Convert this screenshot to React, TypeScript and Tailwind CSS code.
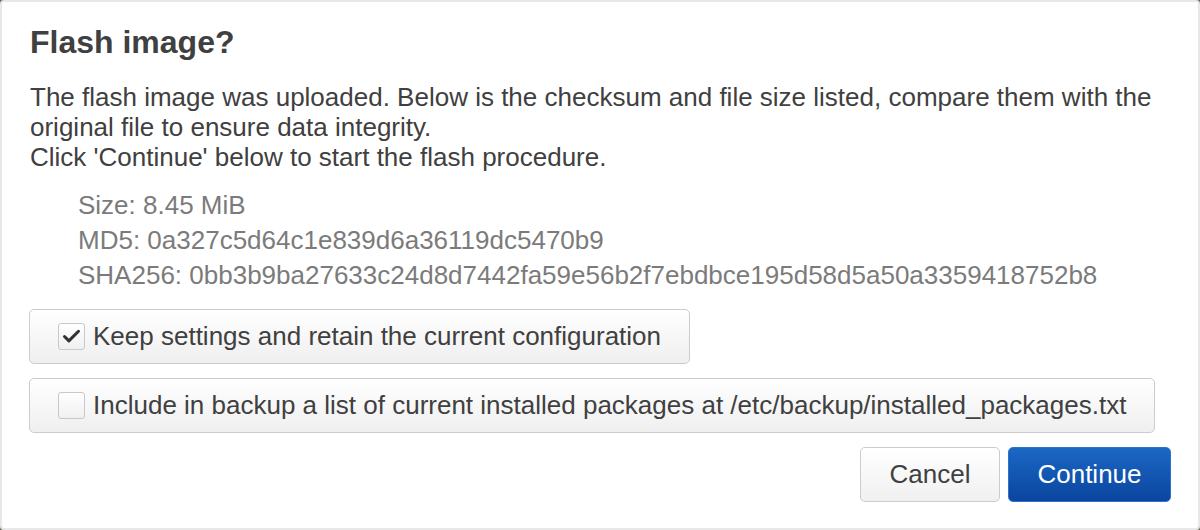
import { Check } from "lucide-react";

export default function App() {
  return (
    <div className="h-[530px] w-[1200px] bg-[#6b6556] font-['Liberation_Sans',Arial,sans-serif]">
      <div className="flex h-full w-full flex-col rounded-[4px] border-2 border-[#e8e8e8] bg-white px-[27px] pt-[22px] text-[#404040]">
        <h1 className="pl-[1px] text-[32px] font-bold leading-[37px]">Flash image?</h1>

        <p className="mt-[21px] pl-[1px] text-[26px] leading-[30px]">
          The flash image was uploaded. Below is the checksum and file size listed, compare them with the
          original file to ensure data integrity.
          <br />
          Click 'Continue' below to start the flash procedure.
        </p>

        <ul className="mt-[16px] pl-[49px] text-[26px] leading-[35px] text-[#7b7b7b]">
          <li>Size: 8.45 MiB</li>
          <li>MD5: 0a327c5d64c1e839d6a36119dc5470b9</li>
          <li>SHA256: 0bb3b9ba27633c24d8d7442fa59e56b2f7ebdbce195d58d5a50a3359418752b8</li>
        </ul>

        <div className="mt-[16px] flex flex-col items-start gap-[14px]">
          <label className="flex h-[55px] items-center gap-[8px] rounded-[5px] border border-[#ccc] bg-gradient-to-b from-white to-[#efefef] pl-[28px] pr-[28px] text-[26px]">
            <span className="flex h-[27px] w-[27px] items-center justify-center rounded-[3px] border border-[#c8c8c8] bg-gradient-to-b from-white to-[#f0f0f0]">
              <Check className="h-[21px] w-[21px] text-[#333]" strokeWidth={3.5} />
            </span>
            Keep settings and retain the current configuration
          </label>
          <label className="flex h-[55px] items-center gap-[8px] rounded-[5px] border border-[#ccc] bg-gradient-to-b from-white to-[#efefef] pl-[28px] pr-[28px] text-[26px]">
            <span className="h-[27px] w-[27px] rounded-[3px] border border-[#c8c8c8] bg-gradient-to-b from-white to-[#f0f0f0]" />
            Include in backup a list of current installed packages at /etc/backup/installed_packages.txt
          </label>
        </div>

        <div className="mt-[14px] flex justify-end gap-[8px]">
          <button className="h-[55px] w-[140px] rounded-[5px] border border-[#ccc] bg-gradient-to-b from-white to-[#f0f0f0] text-[26px] text-[#404040]">
            Cancel
          </button>
          <button className="h-[55px] w-[163px] rounded-[5px] border border-[#2a74cf] bg-gradient-to-b from-[#1b68c4] to-[#0b459f] text-[26px] text-white">
            Continue
          </button>
        </div>
      </div>
    </div>
  );
}
